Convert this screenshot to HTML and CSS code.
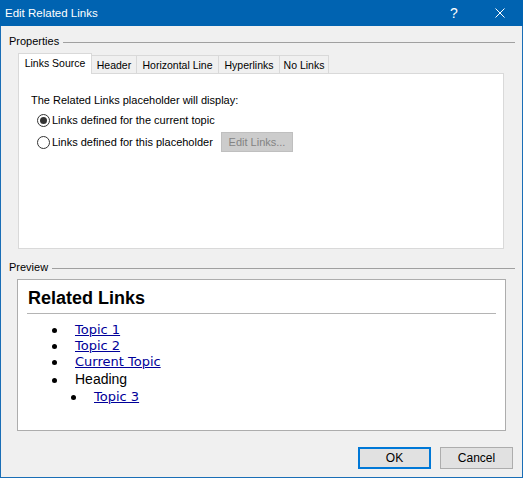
FILE: index.html
```html
<!DOCTYPE html>
<html lang="en">

<head>
    <meta charset="UTF-8">
    <title>Edit Related Links</title>
    <link rel="stylesheet" href="styles.css">
</head>

<body>
    <div class="window">
        <div class="titlebar">
            <span class="title">Edit Related Links</span>
            <span class="caption-btn">?</span>
            <span class="caption-btn">
                <svg width="10" height="10" viewBox="0 0 10 10">
                    <path d="M0.5 0.5 L9.5 9.5 M9.5 0.5 L0.5 9.5" stroke="#fff" stroke-width="1" fill="none" />
                </svg>
            </span>
        </div>

        <div class="main">
            <div class="group-label">
                <span>Properties</span>
                <span class="rule"></span>
            </div>

            <div class="tabs">
                <div class="tab active tab-source">Links Source</div>
                <div class="tab tab-header">Header</div>
                <div class="tab tab-line">Horizontal Line</div>
                <div class="tab tab-hyper">Hyperlinks</div>
                <div class="tab tab-none">No Links</div>
            </div>

            <div class="panel">
                <div class="intro">The Related Links placeholder will display:</div>
                <div class="option">
                    <span class="radio checked"></span>
                    <span>Links defined for the current topic</span>
                </div>
                <div class="option">
                    <span class="radio"></span>
                    <span class="option-label">Links defined for this placeholder</span>
                    <button class="btn-disabled" disabled>Edit Links...</button>
                </div>
            </div>

            <div class="group-label preview-label">
                <span>Preview</span>
                <span class="rule"></span>
            </div>

            <div class="preview">
                <h1>Related Links</h1>
                <hr>
                <ul class="links">
                    <li><span class="bullet"></span><a href="#">Topic 1</a></li>
                    <li><span class="bullet"></span><a href="#">Topic 2</a></li>
                    <li><span class="bullet"></span><a href="#">Current Topic</a></li>
                    <li class="heading"><span class="bullet"></span>Heading
                        <ul class="links sub">
                            <li><span class="bullet"></span><a href="#">Topic 3</a></li>
                        </ul>
                    </li>
                </ul>
            </div>

            <div class="actions">
                <button class="btn default">OK</button>
                <button class="btn">Cancel</button>
            </div>
        </div>
    </div>
</body>

</html>
```

FILE: styles.css
```css
body {
    margin: 0;
    font-family: "Liberation Sans", Arial, sans-serif;
    font-size: 11px;
    color: #000;
}

.window {
    width: 523px;
    height: 478px;
    display: flex;
    flex-direction: column;
    background: #f0f0f0;
}

.titlebar {
    height: 26px;
    flex: none;
    display: flex;
    align-items: center;
    padding-left: 5px;
    background: #0063b1;
    color: #fff;
    font-size: 11.5px;
}

.title {
    flex: 1;
}

.caption-btn {
    width: 46px;
    height: 26px;
    display: flex;
    align-items: center;
    justify-content: center;
    font-size: 14px;
}

.main {
    flex: 1;
    display: flex;
    flex-direction: column;
    border: 1px solid #1a6eb6;
    border-top: 0;
    padding: 0 7px 0 8px;
}

.group-label {
    display: flex;
    align-items: center;
    gap: 4px;
    height: 16px;
    margin-top: 7px;
}

.group-label .rule {
    flex: 1;
    border-top: 1px solid #a0a0a0;
    margin-top: 2px;
}

.preview-label {
    margin-top: 10px;
}

.tabs {
    display: flex;
    align-items: flex-end;
    height: 20px;
    margin: 4px 0 0 9px;
    position: relative;
    z-index: 1;
    font-size: 10.5px;
}

.tab {
    height: 18px;
    line-height: 18px;
    box-sizing: border-box;
    margin-left: -1px;
    border: 1px solid #d9d9d9;
    border-bottom: 0;
    background: #f0f0f0;
    text-align: center;
    white-space: nowrap;
}

.tab.active {
    height: 21px;
    line-height: 19px;
    margin: 0 0 -1px 0;
    background: #fff;
}

.tab-source { width: 74px; }
.tab-header { width: 46px; }
.tab-line { width: 83px; }
.tab-hyper { width: 62px; }
.tab-none { width: 50px; }

.panel {
    height: 176px;
    box-sizing: border-box;
    margin: 0 11px 0 9px;
    padding: 18px 12px 0;
    border: 1px solid #d9d9d9;
    background: #fff;
}

.intro {
    line-height: 16px;
}

.option {
    display: flex;
    align-items: center;
    height: 20px;
    margin-top: 2px;
    padding-left: 6px;
}

.radio {
    width: 13px;
    height: 13px;
    box-sizing: border-box;
    border: 1px solid #333;
    border-radius: 50%;
    background: #fff;
    margin-right: 2px;
    display: flex;
    align-items: center;
    justify-content: center;
}

.radio.checked::after {
    content: "";
    width: 7px;
    height: 7px;
    border-radius: 50%;
    background: #333;
}

.option-label {
    width: 169px;
}

.btn-disabled {
    width: 72px;
    height: 20px;
    padding: 0;
    font: inherit;
    color: #838383;
    background: #cccccc;
    border: 1px solid #bfbfbf;
}

.preview {
    height: 152px;
    box-sizing: border-box;
    margin: 4px 9px 0 8px;
    padding: 7px 9px 0 9px;
    border: 1px solid #adadad;
    background: #fff;
}

.preview h1 {
    margin: 0 0 0 1px;
    font-size: 18px;
    line-height: 22px;
    font-weight: bold;
}

.preview hr {
    height: 0;
    margin: 4px 0 0;
    border: 0;
    border-top: 1px solid #b4b4b4;
}

.links {
    list-style: none;
    margin: 8px 0 0;
    padding-left: 25px;
    font-family: "DejaVu Sans", Verdana, sans-serif;
    font-size: 13px;
    line-height: 16px;
}

.links.sub {
    margin: 0;
    padding-left: 19px;
}

.links a {
    color: #000099;
}

.links .heading {
    font-family: "Liberation Sans", Arial, sans-serif;
    font-size: 14px;
    line-height: 19px;
}

.links .heading .sub {
    font-family: "DejaVu Sans", Verdana, sans-serif;
    font-size: 13px;
    line-height: 16px;
}

.bullet {
    display: inline-block;
    width: 5px;
    height: 5px;
    border-radius: 50%;
    background: #000;
    margin-right: 18px;
    vertical-align: middle;
}

.actions {
    display: flex;
    justify-content: flex-end;
    gap: 9px;
    margin-top: 16px;
    padding-right: 2px;
}

.btn {
    width: 73px;
    height: 22px;
    padding: 0;
    font: inherit;
    font-size: 12px;
    color: #000;
    background: #e1e1e1;
    border: 1px solid #adadad;
}

.btn.default {
    border: 2px solid #0078d7;
}
```
